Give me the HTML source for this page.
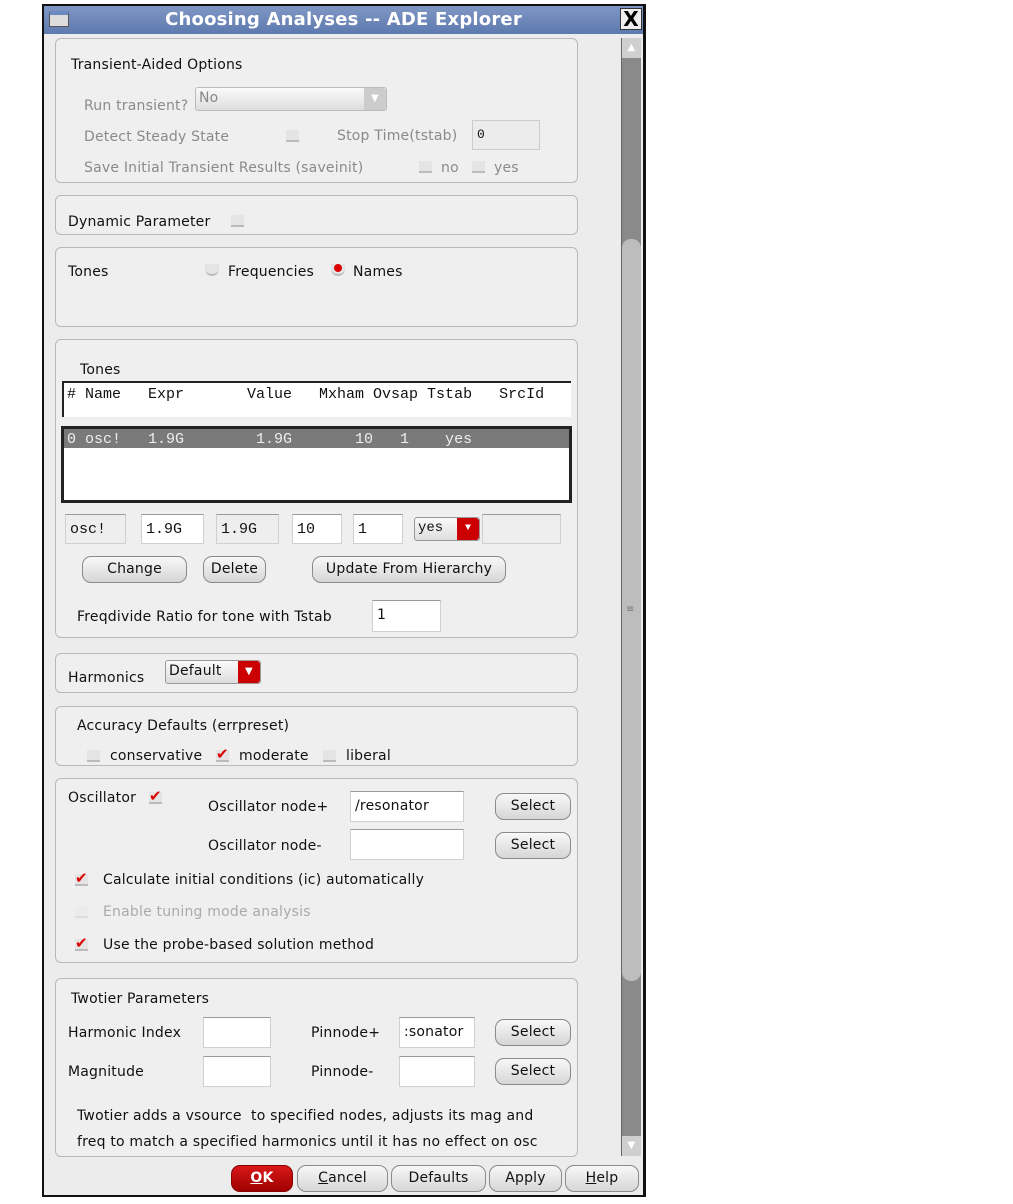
<!DOCTYPE html>
<html><head><meta charset="utf-8"><style>
*{box-sizing:border-box;margin:0;padding:0}
body{width:1013px;height:1204px;background:#fff;position:relative;font-family:"DejaVu Sans","Liberation Sans",sans-serif;font-size:14px;letter-spacing:0.2px;color:#111;overflow:hidden}
.a{position:absolute;white-space:nowrap}
.win{left:42px;top:4px;width:604px;height:1193px;background:#ececec;border:2px solid #111;border-right-width:3px}
.title{left:44px;top:6px;width:599px;height:28px;background:linear-gradient(#7f97c4,#5d79ae);color:#fff;font-weight:bold;font-size:18px;text-align:center;line-height:28px}
.panel{position:absolute;left:55px;width:523px;border:1px solid #b8b8b8;border-radius:6px;background:#efefef}
.g{color:#8a8a8a}
.inp{position:absolute;background:#fff;border:1px solid #d0d0d0;border-top-color:#9a9a9a;font-size:14px;padding:6px 4px 0}
.mono{font-family:"Liberation Mono","DejaVu Sans Mono",monospace;font-size:15px;letter-spacing:0}
.btn{position:absolute;height:27px;border:1px solid #8a8a8a;border-radius:9px;background:linear-gradient(#f8f8f8,#d6d6d6);text-align:center;line-height:25px;font-size:14px}
.cb{position:absolute;width:13px;height:12px;border-bottom:2px solid #bbb;background:#e4e4e4}
.ck{position:absolute;color:#d00;font-size:15px;font-weight:bold;line-height:12px}
.dd{position:absolute;height:24px;border:1px solid #999;border-radius:3px;background:linear-gradient(#fafafa,#ddd);font-size:14px;padding:2px 3px}
.dd b{position:absolute;right:0;top:0;width:22px;height:22px;background:#c00;border-radius:0 3px 3px 0;color:#fff;font-size:10px;text-align:center;line-height:22px}
</style></head><body>
<div class="a win"></div>
<div class="a title">Choosing Analyses -- ADE Explorer</div>
<div class="a" style="left:49px;top:11px;width:20px;height:16px;background:#ddd;border:1px solid #555;border-top:4px solid #6b8ac0"></div>
<div class="a" style="left:620px;top:8px;width:22px;height:22px;background:#eee;border:1px solid #333;font-size:20px;font-weight:bold;line-height:20px;text-align:center;color:#000">X</div>
<!-- scrollbar -->
<div class="a" style="left:621px;top:38px;width:20px;height:1118px;background:#8a8a8a;border-left:1px solid #666"></div>
<div class="a" style="left:622px;top:38px;width:19px;height:20px;background:#cfcfcf;color:#fff;font-size:10px;text-align:center;line-height:20px">▲</div>
<div class="a" style="left:622px;top:1136px;width:19px;height:20px;background:#cfcfcf;color:#fff;font-size:10px;text-align:center;line-height:20px">▼</div>
<div class="a" style="left:622px;top:239px;width:19px;height:742px;background:#bdbdbd;border-radius:9px 9px 9px 9px"></div>
<div class="a" style="left:626px;top:604px;font-size:10px;color:#777">≡</div>

<!-- panel 1 -->
<div class="panel" style="top:38px;height:145px"></div>
<div class="a" style="left:71px;top:57px">Transient-Aided Options</div>
<div class="a g" style="left:84px;top:98px">Run transient?</div>
<div class="dd" style="left:195px;top:87px;width:192px;color:#888;border-color:#bbb">No<b style="background:#ccc">▼</b></div>
<div class="a g" style="left:84px;top:129px">Detect Steady State</div>
<div class="cb" style="left:286px;top:130px"></div>
<div class="a g" style="left:337px;top:128px">Stop Time(tstab)</div>
<div class="inp mono" style="left:472px;top:120px;width:68px;height:30px;background:#ececec;border-color:#ccc;font-size:13px">0</div>
<div class="a g" style="left:84px;top:160px">Save Initial Transient Results (saveinit)</div>
<div class="cb" style="left:419px;top:161px"></div><div class="a g" style="left:441px;top:160px">no</div>
<div class="cb" style="left:472px;top:161px"></div><div class="a g" style="left:494px;top:160px">yes</div>

<!-- panel 2 -->
<div class="panel" style="top:195px;height:40px"></div>
<div class="a" style="left:68px;top:214px">Dynamic Parameter</div>
<div class="cb" style="left:231px;top:215px"></div>

<!-- panel 3 -->
<div class="panel" style="top:247px;height:80px"></div>
<div class="a" style="left:68px;top:264px">Tones</div>
<div class="a" style="left:205px;top:264px;width:14px;height:12px;border-radius:0 0 7px 7px;border-bottom:2px solid #bbb;background:#e4e4e4"></div>
<div class="a" style="left:228px;top:264px">Frequencies</div>
<div class="a" style="left:331px;top:264px;width:14px;height:12px;border-radius:0 0 7px 7px;border-bottom:2px solid #bbb;background:#e4e4e4"></div>
<div class="a" style="left:334px;top:264px;width:8px;height:8px;border-radius:50%;background:#d00"></div>
<div class="a" style="left:353px;top:264px">Names</div>

<!-- panel 4 -->
<div class="panel" style="top:339px;height:299px"></div>
<div class="a" style="left:80px;top:362px">Tones</div>
<div class="a" style="left:62px;top:381px;width:509px;height:36px;background:#fff;border-top:2px solid #222;border-left:2px solid #222"></div>
<div class="a mono" style="left:67px;top:386px">#&nbsp;Name&nbsp;&nbsp;&nbsp;Expr&nbsp;&nbsp;&nbsp;&nbsp;&nbsp;&nbsp;&nbsp;Value&nbsp;&nbsp;&nbsp;Mxham Ovsap Tstab&nbsp;&nbsp;&nbsp;SrcId</div>
<div class="a" style="left:61px;top:426px;width:511px;height:77px;background:#fff;border:3px solid #222"></div>
<div class="a" style="left:64px;top:429px;width:505px;height:19px;background:#7a7a7a"></div>
<div class="a mono" style="left:67px;top:431px;color:#eee">0 osc!&nbsp;&nbsp;&nbsp;1.9G&nbsp;&nbsp;&nbsp;&nbsp;&nbsp;&nbsp;&nbsp;&nbsp;1.9G&nbsp;&nbsp;&nbsp;&nbsp;&nbsp;&nbsp;&nbsp;10&nbsp;&nbsp;&nbsp;1&nbsp;&nbsp;&nbsp;&nbsp;yes</div>
<div class="inp mono" style="left:65px;top:514px;width:61px;height:30px;background:#eee">osc!</div>
<div class="inp mono" style="left:141px;top:514px;width:63px;height:30px">1.9G</div>
<div class="inp mono" style="left:216px;top:514px;width:63px;height:30px;background:#eee">1.9G</div>
<div class="inp mono" style="left:292px;top:514px;width:50px;height:30px">10</div>
<div class="inp mono" style="left:353px;top:514px;width:50px;height:30px">1</div>
<div class="dd mono" style="left:414px;top:517px;width:66px">yes<b>▼</b></div>
<div class="inp" style="left:482px;top:514px;width:79px;height:30px;background:#eee"></div>
<div class="btn" style="left:82px;top:556px;width:105px">Change</div>
<div class="btn" style="left:203px;top:556px;width:63px">Delete</div>
<div class="btn" style="left:312px;top:556px;width:194px">Update From Hierarchy</div>
<div class="a" style="left:77px;top:609px">Freqdivide Ratio for tone with Tstab</div>
<div class="inp" style="left:372px;top:600px;width:69px;height:32px">1</div>

<!-- panel 5 -->
<div class="panel" style="top:653px;height:40px"></div>
<div class="a" style="left:68px;top:670px">Harmonics</div>
<div class="dd" style="left:165px;top:660px;width:96px">Default<b>▼</b></div>

<!-- panel 6 -->
<div class="panel" style="top:706px;height:60px"></div>
<div class="a" style="left:77px;top:718px">Accuracy Defaults (errpreset)</div>
<div class="cb" style="left:87px;top:750px"></div><div class="a" style="left:110px;top:748px">conservative</div>
<div class="cb" style="left:216px;top:750px"></div><div class="ck" style="left:216px;top:748px">✔</div><div class="a" style="left:239px;top:748px">moderate</div>
<div class="cb" style="left:323px;top:750px"></div><div class="a" style="left:346px;top:748px">liberal</div>

<!-- panel 7 -->
<div class="panel" style="top:778px;height:185px"></div>
<div class="a" style="left:68px;top:790px">Oscillator</div>
<div class="cb" style="left:149px;top:792px"></div><div class="ck" style="left:149px;top:790px">✔</div>
<div class="a" style="left:208px;top:799px">Oscillator node+</div>
<div class="inp" style="left:350px;top:791px;width:114px;height:31px">/resonator</div>
<div class="btn" style="left:495px;top:793px;width:76px">Select</div>
<div class="a" style="left:208px;top:838px">Oscillator node-</div>
<div class="inp" style="left:350px;top:829px;width:114px;height:31px"></div>
<div class="btn" style="left:495px;top:832px;width:76px">Select</div>
<div class="cb" style="left:75px;top:874px"></div><div class="ck" style="left:75px;top:872px">✔</div>
<div class="a" style="left:103px;top:872px">Calculate initial conditions (ic) automatically</div>
<div class="cb" style="left:75px;top:906px;background:#ececec;border-color:#ddd"></div>
<div class="a" style="left:103px;top:904px;color:#aaa">Enable tuning mode analysis</div>
<div class="cb" style="left:75px;top:939px"></div><div class="ck" style="left:75px;top:937px">✔</div>
<div class="a" style="left:103px;top:937px">Use the probe-based solution method</div>

<!-- panel 8 -->
<div class="panel" style="top:978px;height:179px"></div>
<div class="a" style="left:71px;top:991px">Twotier Parameters</div>
<div class="a" style="left:68px;top:1025px">Harmonic Index</div>
<div class="inp" style="left:203px;top:1017px;width:68px;height:31px"></div>
<div class="a" style="left:311px;top:1025px">Pinnode+</div>
<div class="inp" style="left:399px;top:1017px;width:76px;height:31px">:sonator</div>
<div class="btn" style="left:495px;top:1019px;width:76px">Select</div>
<div class="a" style="left:68px;top:1064px">Magnitude</div>
<div class="inp" style="left:203px;top:1056px;width:68px;height:31px"></div>
<div class="a" style="left:311px;top:1064px">Pinnode-</div>
<div class="inp" style="left:399px;top:1056px;width:76px;height:31px"></div>
<div class="btn" style="left:495px;top:1058px;width:76px">Select</div>
<div class="a" style="left:77px;top:1108px">Twotier adds a vsource&nbsp; to specified nodes, adjusts its mag and</div>
<div class="a" style="left:77px;top:1134px">freq to match a specified harmonics until it has no effect on osc</div>

<!-- bottom buttons -->
<div class="btn" style="left:231px;top:1165px;width:62px;background:linear-gradient(#d81818,#a00000);color:#fff;font-weight:bold;border-color:#800"><u>O</u>K</div>
<div class="btn" style="left:297px;top:1165px;width:91px"><u>C</u>ancel</div>
<div class="btn" style="left:391px;top:1165px;width:95px">Defaults</div>
<div class="btn" style="left:489px;top:1165px;width:73px">Apply</div>
<div class="btn" style="left:565px;top:1165px;width:74px"><u>H</u>elp</div>
</body></html>
